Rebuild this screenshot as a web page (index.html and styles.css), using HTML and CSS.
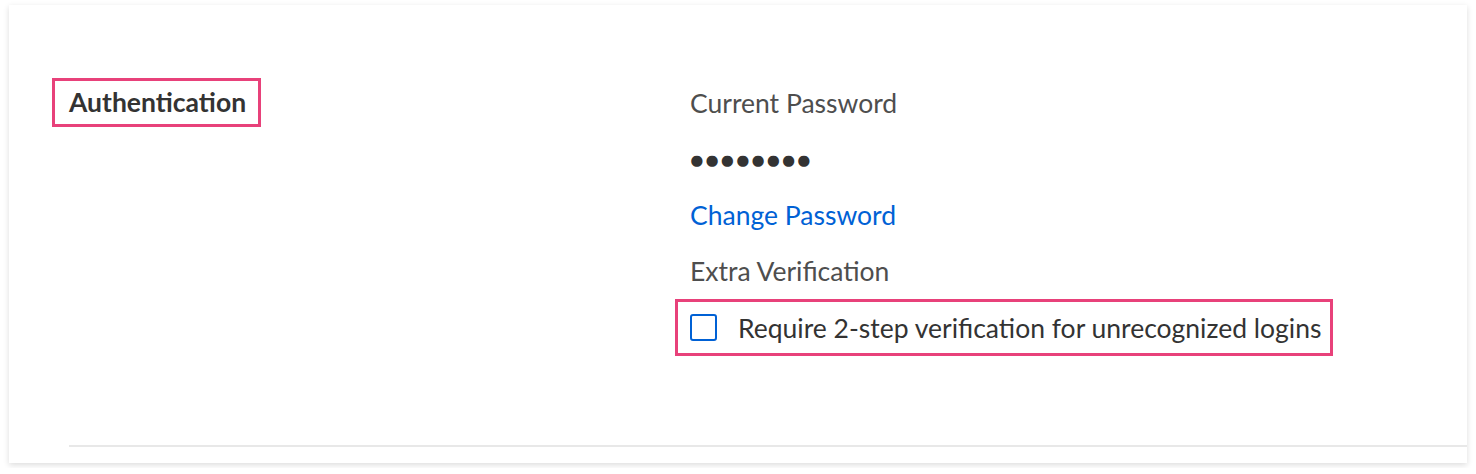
FILE: index.html
```html
<!DOCTYPE html>
<html>
<head>
    <title>Account Settings</title>
    <meta charset="utf-8">
    <meta name="viewport" content="width=device-width, initial-scale=1">
    <link rel="stylesheet" href="styles.css">
</head>
<body>
    <div class="card">
        <div class="section">
            <div class="section-title">
                <h2 class="highlight title">Authentication</h2>
            </div>
            <div class="section-body">
                <div class="row label">Current Password</div>
                <div class="row dots">&#9679;&#9679;&#9679;&#9679;&#9679;&#9679;&#9679;&#9679;</div>
                <div class="row"><a href="#" class="link">Change Password</a></div>
                <div class="row label">Extra Verification</div>
                <label class="row checkbox-row highlight">
                    <span class="checkbox"></span>
                    <span>Require 2-step verification for unrecognized logins</span>
                </label>
            </div>
        </div>
    </div>
</body>
</html>
```

FILE: styles.css
```css
body { margin: 0; background: #fff; font-family: Lato, "Open Sans", sans-serif; color: #333; }
.card { margin: 5px 9px; width: 1458px; background: #fff; box-shadow: 0 2px 6px rgba(0, 0, 0, 0.14); padding-bottom: 16px; }
.section { display: flex; margin-left: 60px; padding: 70px 0 89px; border-bottom: 2px solid #e8e8e8; }
.section-title { width: 621px; }
.title { display: inline-block; margin: 3px 0 0 -17px; padding: 0 12px 0 14px; font-size: 26.5px; font-weight: bold; line-height: 43px; color: #333; }
.highlight { border: 3px solid #e8417a; }
.row { height: 56px; line-height: 56px; font-size: 26.5px; }
.label { color: #4e4e4e; }
.dots { font-size: 23px; letter-spacing: 1.5px; color: #333; }
.link { color: #0061d5; text-decoration: none; }
.checkbox-row { display: flex; align-items: center; gap: 21px; height: 51px; margin-left: -15px; padding: 0 9px 0 12px; color: #333; }
.checkbox { width: 23px; height: 23px; border: 2px solid #0061d5; border-radius: 3px; }
```
